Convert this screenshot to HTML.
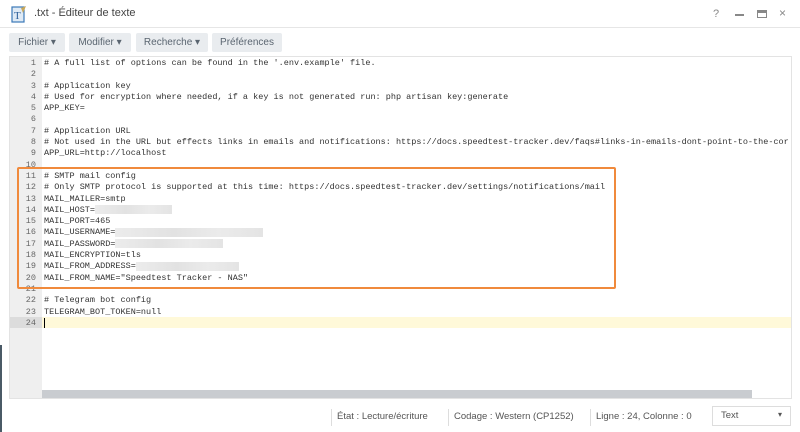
<!DOCTYPE html>
<html><head><meta charset="utf-8"><style>
*{margin:0;padding:0;box-sizing:border-box}
body{width:800px;height:432px;background:#fff;font-family:"Liberation Sans",sans-serif;position:relative;overflow:hidden;color:#333}
.title{position:absolute;left:0;top:0;width:800px;height:28px;border-bottom:1px solid #e6e6e6}
.title .t{position:absolute;left:34px;top:7px;font-size:11px;color:#444}
.btn{position:absolute;top:33px;height:19px;background:#e9ecef;border-radius:2px;font-size:10px;color:#5a6570;text-align:center;line-height:19px}
.ed{position:absolute;left:9px;top:56px;width:783px;height:343px;border:1px solid #e3e3e3;background:#fff;overflow:hidden}
.gut{position:absolute;left:0;top:0;width:32px;height:100%;background:#efefef}
.code{position:absolute;left:0;top:1px;font-family:"Liberation Mono",monospace;font-size:8.5px;line-height:11.3px;white-space:pre;color:#333}
.ln{display:inline-block;width:26px;text-align:right;color:#666;margin-right:8px}
.cur{position:absolute;left:32px;top:260px;width:760px;height:11px;background:#fff9d9}
.curg{position:absolute;left:0;top:260px;width:32px;height:11px;background:#dcdcdc}
.blur{display:inline-block;height:9px;vertical-align:middle;background:linear-gradient(90deg,#ececec,#e2e2e2 40%,#ebebeb 70%,#e4e4e4)}
.box{position:absolute;left:17px;top:167px;width:599px;height:122px;border:2px solid #f08a3c;border-radius:2px}
.sb{position:absolute;left:32px;top:333px;width:710px;height:9px;background:#c9ccd0}
.st{position:absolute;top:409px;font-size:9.5px;color:#555;border-left:1px solid #ddd;padding-left:5px;height:17px;line-height:15px}
</style></head><body>
<div class="title">
<svg style="position:absolute;left:11px;top:6px" width="16" height="17" viewBox="0 0 16 17"><rect x="1" y="1" width="12" height="15" fill="#dfeaf5" stroke="#3b78b8" stroke-width="1.2"/><text x="3" y="13" font-size="11" font-family="Liberation Serif" fill="#2b5e99">T</text><path d="M10 2 L15 0 L12 7 Z" fill="#c9a85a"/></svg>
<div class="t">.txt - Éditeur de texte</div>
<div style="position:absolute;left:713px;top:8px;font-size:11px;color:#888">?</div>
<div style="position:absolute;left:735px;top:14px;width:9px;height:2px;background:#888"></div>
<div style="position:absolute;left:757px;top:10px;width:10px;height:8px;border:1px solid #888;border-top-width:3px"></div>
<div style="position:absolute;left:779px;top:6px;font-size:12px;color:#888">×</div>
</div>
<div class="btn" style="left:9px;width:56px">Fichier ▾</div>
<div class="btn" style="left:69px;width:62px">Modifier ▾</div>
<div class="btn" style="left:136px;width:72px">Recherche ▾</div>
<div class="btn" style="left:212px;width:70px">Préférences</div>
<div class="ed">
<div class="gut"></div><div class="curg"></div><div class="cur"></div>
<div style="position:absolute;left:34px;top:261px;width:1px;height:10px;background:#000"></div>
<div class="code"><span class="ln">1</span># A full list of options can be found in the '.env.example' file.
<span class="ln">2</span>
<span class="ln">3</span># Application key
<span class="ln">4</span># Used for encryption where needed, if a key is not generated run: php artisan key:generate
<span class="ln">5</span>APP_KEY=
<span class="ln">6</span>
<span class="ln">7</span># Application URL
<span class="ln">8</span># Not used in the URL but effects links in emails and notifications: https://docs.speedtest-tracker.dev/faqs#links-in-emails-dont-point-to-the-cor
<span class="ln">9</span>APP_URL=http://localhost
<span class="ln">10</span>
<span class="ln">11</span># SMTP mail config
<span class="ln">12</span># Only SMTP protocol is supported at this time: https://docs.speedtest-tracker.dev/settings/notifications/mail
<span class="ln">13</span>MAIL_MAILER=smtp
<span class="ln">14</span>MAIL_HOST=<span class="blur" style="width:77px"></span>
<span class="ln">15</span>MAIL_PORT=465
<span class="ln">16</span>MAIL_USERNAME=<span class="blur" style="width:148px"></span>
<span class="ln">17</span>MAIL_PASSWORD=<span class="blur" style="width:108px"></span>
<span class="ln">18</span>MAIL_ENCRYPTION=tls
<span class="ln">19</span>MAIL_FROM_ADDRESS=<span class="blur" style="width:103px"></span>
<span class="ln">20</span>MAIL_FROM_NAME="Speedtest Tracker - NAS"
<span class="ln">21</span>
<span class="ln">22</span># Telegram bot config
<span class="ln">23</span>TELEGRAM_BOT_TOKEN=null
<span class="ln">24</span></div>
<div class="sb"></div>
</div>
<div class="box"></div>
<div style="position:absolute;left:0;top:345px;width:2px;height:87px;background:#4a5a66"></div>
<div class="st" style="left:331px">État : Lecture/écriture</div>
<div class="st" style="left:448px">Codage : Western (CP1252)</div>
<div class="st" style="left:590px">Ligne : 24, Colonne : 0</div>
<div style="position:absolute;left:712px;top:406px;width:79px;height:20px;border:1px solid #ddd;font-size:9.5px;color:#555;padding:3px 8px">Text<span style="position:absolute;right:8px;top:3px;font-size:8px">▾</span></div>
</body></html>
